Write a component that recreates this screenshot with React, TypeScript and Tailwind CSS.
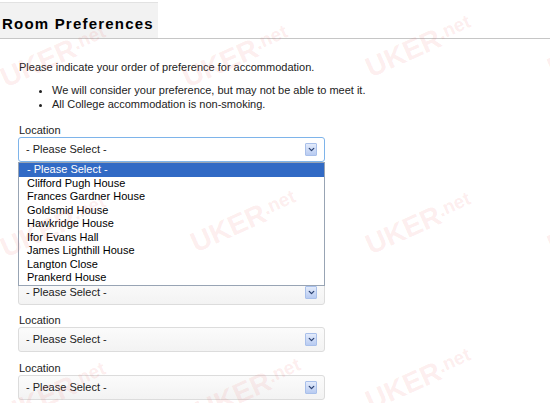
import { ChevronDown } from 'lucide-react'

const houses = [
  'Clifford Pugh House',
  'Frances Gardner House',
  'Goldsmid House',
  'Hawkridge House',
  'Ifor Evans Hall',
  'James Lighthill House',
  'Langton Close',
  'Prankerd House',
]

// faint tiled watermark over the whole shot
const marks = [
  { x: 55, y: 55 },
  { x: 237, y: 55 },
  { x: 420, y: 45 },
  { x: 602, y: 45 },
  { x: 55, y: 225 },
  { x: 245, y: 220 },
  { x: 420, y: 222 },
  { x: 602, y: 222 },
  { x: 55, y: 392 },
  { x: 250, y: 388 },
  { x: 420, y: 378 },
]

const Arrow = () => (
  <span className="flex h-[13px] w-[12px] items-center justify-center rounded-[1px] border border-[#a9c0ea] bg-gradient-to-b from-[#e3ebfb] to-[#b8cbf1]">
    <ChevronDown size={9} strokeWidth={3.5} className="text-[#2c4373]" />
  </span>
)

const SelectBox = ({ focused = false }: { focused?: boolean }) => (
  <div
    className={`flex h-[25px] w-[307px] items-center justify-between rounded-[3px] border pl-[7px] pr-[7px] text-[11px] text-[#222] ${
      focused ? 'border-[#7eb4ea] bg-white' : 'border-[#dcdcdc] bg-gradient-to-b from-[#fbfbfb] to-[#f3f3f3]'
    }`}
  >
    <span>- Please Select -</span>
    <Arrow />
  </div>
)

const App = () => {
  return (
    <div className="relative h-[403px] w-[550px] overflow-hidden bg-white font-['Liberation_Sans',Arial,sans-serif] text-[#222]">
      {/* header */}
      <div className="mt-[2px] h-[36px] w-[158px] border-t border-[#e2e2e2] bg-[#f2f2f2] pl-[2px] pt-[12px]">
        <h1 className="text-[15px] font-bold leading-[18px] tracking-[1.2px] text-black">Room Preferences</h1>
      </div>
      <div className="h-px w-full bg-[#c6c6c6]" />

      <div className="px-[19px]">
        <p className="mt-[21px] text-[11px] leading-[14px]">
          Please indicate your order of preference for accommodation.
        </p>
        <ul className="mt-[9px] list-disc pl-[33px] text-[11px] leading-[14px]">
          <li>We will consider your preference, but may not be able to meet it.</li>
          <li>All College accommodation is non-smoking.</li>
        </ul>

        <div className="mt-[12px] -ml-px">
          {[0, 1, 2, 3, 4, 5].map((i) => (
            <div key={i} className="relative mb-[8.5px]">
              <div className="pl-px text-[11px] leading-[14px]">Location</div>
              <SelectBox focused={i === 0} />
              {i === 0 && (
                <div className="absolute left-0 top-full z-10 w-[307px] border border-[#98a4b4] bg-white text-[11px] leading-[13.5px]">
                  <div className="bg-[#316ac5] pl-[8px] text-white">- Please Select -</div>
                  {houses.map((h) => (
                    <div key={h} className="pl-[8px] text-black">
                      {h}
                    </div>
                  ))}
                </div>
              )}
            </div>
          ))}
        </div>
      </div>

      {/* watermark overlay */}
      <div className="pointer-events-none absolute inset-0 z-20">
        {marks.map((m, i) => (
          <div
            key={i}
            className="absolute flex h-[30px] w-[116px] -rotate-[24deg] items-end font-['Liberation_Sans',Arial,sans-serif] font-bold text-[rgba(235,90,90,0.11)]"
            style={{ left: m.x - 58, top: m.y - 15 }}
          >
            <span className="text-[28px] leading-[28px]">UKER</span>
            <span className="mb-[8px] text-[19px] leading-[19px]">.net</span>
          </div>
        ))}
      </div>
    </div>
  )
}

export default App
